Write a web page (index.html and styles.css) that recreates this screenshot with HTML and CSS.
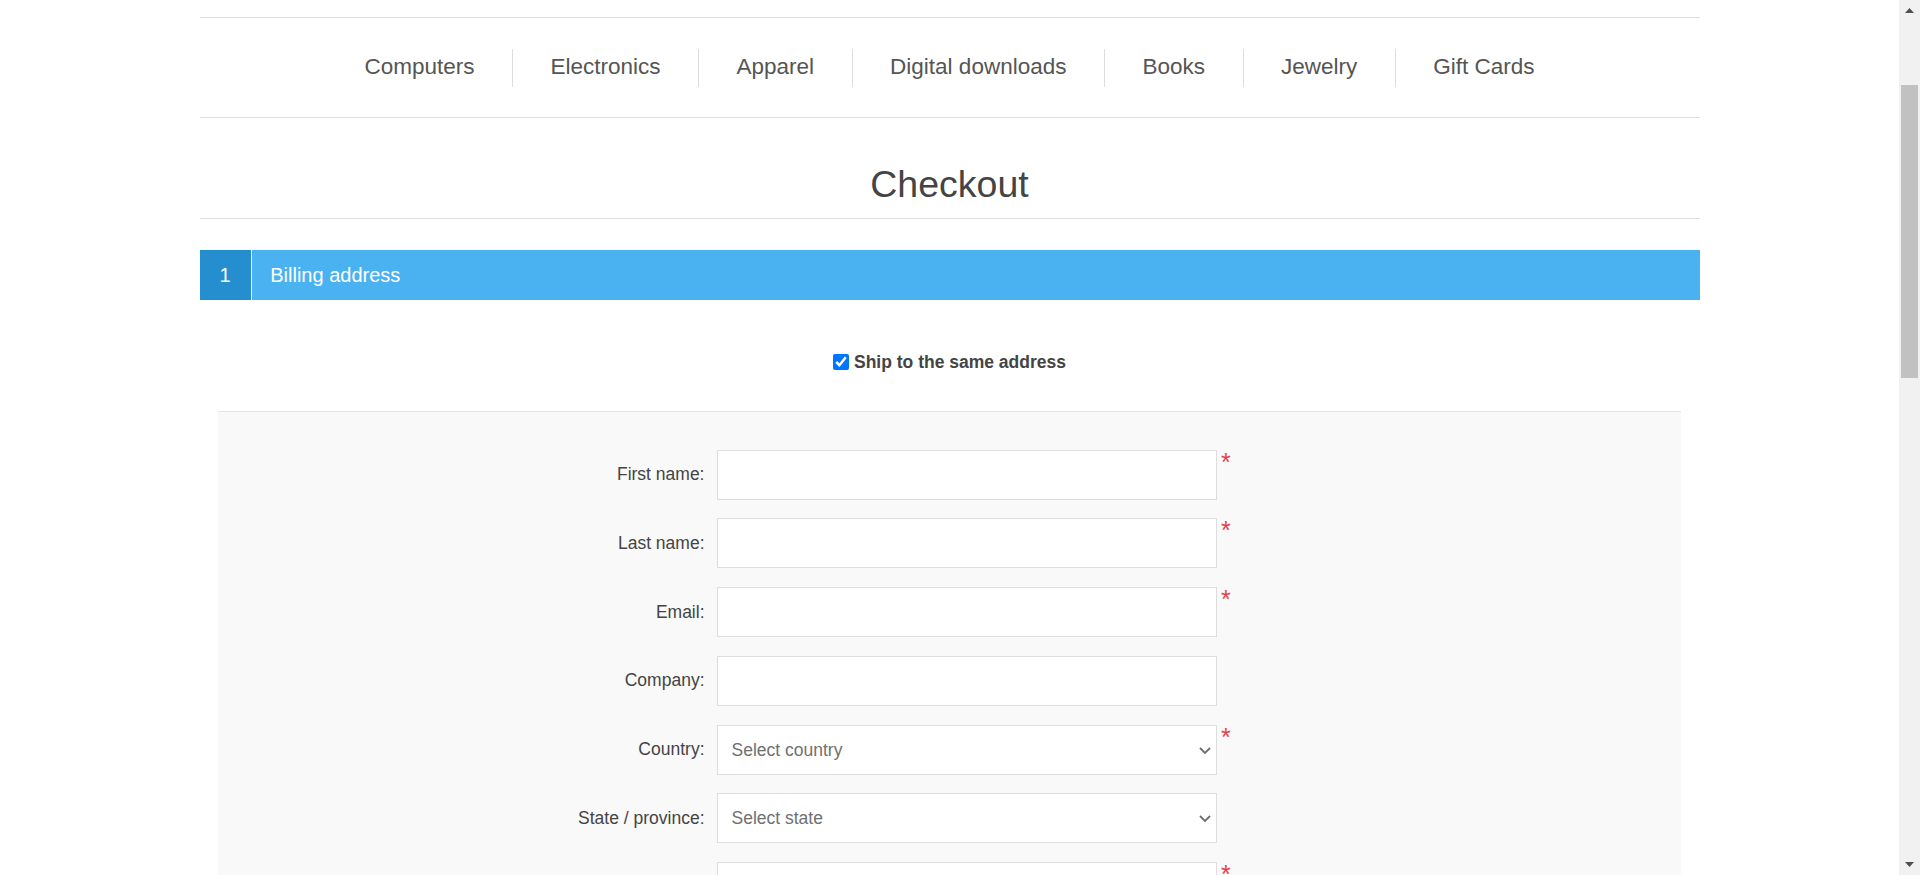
FILE: index.html
```html
<!DOCTYPE html>
<html lang="en">
<head>
<meta charset="utf-8">
<title>Checkout</title>
<link rel="stylesheet" href="styles.css">
</head>
<body>
<div class="page">
  <nav class="header-menu">
    <ul>
      <li><a href="#">Computers</a></li>
      <li><a href="#">Electronics</a></li>
      <li><a href="#">Apparel</a></li>
      <li><a href="#">Digital downloads</a></li>
      <li><a href="#">Books</a></li>
      <li><a href="#">Jewelry</a></li>
      <li><a href="#">Gift Cards</a></li>
    </ul>
  </nav>

  <div class="page-title"><h1>Checkout</h1></div>

  <div class="opc">
    <div class="step-title active"><span class="number">1</span><span class="title">Billing address</span></div>
    <div class="step">
      <div class="same-address">
        <input type="checkbox" id="same" checked>
        <label for="same">Ship to the same address</label>
      </div>
      <div class="edit-address">
        <div class="inputs"><label>First name:</label><input type="text"><span class="required">*</span></div>
        <div class="inputs"><label>Last name:</label><input type="text"><span class="required">*</span></div>
        <div class="inputs"><label>Email:</label><input type="text"><span class="required">*</span></div>
        <div class="inputs"><label>Company:</label><input type="text"></div>
        <div class="inputs"><label>Country:</label><div class="select-wrap"><select><option>Select country</option></select><svg class="chevron" width="12" height="7" viewBox="0 0 12 7"><polyline points="1,1 6,6 11,1" fill="none" stroke="#6f6f6f" stroke-width="1.8"/></svg></div><span class="required">*</span></div>
        <div class="inputs"><label>State / province:</label><div class="select-wrap"><select><option>Select state</option></select><svg class="chevron" width="12" height="7" viewBox="0 0 12 7"><polyline points="1,1 6,6 11,1" fill="none" stroke="#6f6f6f" stroke-width="1.8"/></svg></div></div>
        <div class="inputs"><label class="offscreen-label"></label><input type="text" aria-label="City"><span class="required">*</span></div>
      </div>
    </div>
  </div>
</div>

<div class="scrollbar" aria-hidden="true">
  <div class="sb-button">
    <svg width="9" height="5" viewBox="0 0 9 5"><polygon points="0,5 4.5,0 9,5" fill="#505050"/></svg>
  </div>
  <div class="sb-track"><div class="sb-thumb"></div></div>
  <div class="sb-button">
    <svg width="9" height="5" viewBox="0 0 9 5"><polygon points="0,0 4.5,5 9,0" fill="#505050"/></svg>
  </div>
</div>
</body>
</html>
```
FILE: styles.css
```css
html, body {
  margin: 0;
  padding: 0;
}
html { overflow: hidden; }
body {
  font-family: "Liberation Sans", Arial, sans-serif;
  color: #444;
  background: #fff;
  padding-right: 21px;
  height: 875px;
  overflow: hidden;
}
*, *::before, *::after { box-sizing: border-box; }

.page {
  width: 1500px;
  margin: 0 auto;
  padding-top: 17px;
}

/* top menu */
.header-menu {
  border-top: 1px solid #ddd;
  border-bottom: 1px solid #ddd;
  padding: 31px 0 30px;
}
.header-menu ul {
  display: flex;
  justify-content: center;
  list-style: none;
  margin: 0;
  padding: 0;
}
.header-menu li {
  display: flex;
  align-items: center;
  height: 38px;
  border-left: 1px solid #ddd;
}
.header-menu li:first-child { border-left: none; }
.header-menu a {
  padding: 0 37.5px 2px;
  font-size: 22.5px;
  color: #555;
  text-decoration: none;
}

/* title */
.page-title {
  margin-top: 45px;
  padding-bottom: 12px;
  border-bottom: 1px solid #ddd;
  text-align: center;
}
.page-title h1 {
  margin: 0;
  font-size: 37.5px;
  line-height: 43px;
  font-weight: normal;
  color: #444;
}

/* one page checkout */
.opc { margin-top: 31px; }
.step-title {
  display: flex;
  height: 50px;
  margin-bottom: 1px;
  background: #aaa;
  color: #fff;
  font-size: 20px;
  line-height: 50px;
}
.step-title.active { background: #4ab2f1; }
.step-title .number {
  width: 52px;
  border-right: 1px solid #fff;
  text-align: center;
  background: #999;
}
.step-title.active .number { background: #248ece; }
.step-title .title { padding-left: 18.75px; }

.step {
  padding: 0 18.75px 37.5px;
}
.same-address {
  display: flex;
  align-items: center;
  justify-content: center;
  padding-top: 51px;
  margin-bottom: 39px;
  height: 71px;
}
.same-address input {
  width: 16px;
  height: 16px;
  margin: 0 5px 0 0;
  accent-color: #0075ff;
}
.same-address label {
  font-size: 17.5px;
  font-weight: bold;
  line-height: 20px;
  color: #444;
}

.edit-address {
  border-top: 1px solid #e6e6e6;
  background: #f9f9f9;
  padding: 37.5px 18.75px 18.75px;
}
.inputs {
  display: flex;
  align-items: center;
  margin-bottom: 18.75px;
}
.inputs label {
  width: 467.5px;
  margin-right: 12.5px;
  text-align: right;
  font-size: 17.5px;
  color: #444;
}
.inputs input[type="text"],
.inputs select {
  width: 500px;
  height: 50px;
  border: 1px solid #ddd;
  background: #fff;
  padding: 0 10px;
  font-family: "Liberation Sans", Arial, sans-serif;
  font-size: 17.5px;
  color: #707070;
  border-radius: 0;
  outline: none;
}
.select-wrap {
  position: relative;
  display: flex;
}
.inputs select {
  appearance: none;
  -webkit-appearance: none;
  padding-left: 13.5px;
}
.chevron {
  position: absolute;
  right: 6px;
  top: 22px;
  pointer-events: none;
}
.required {
  align-self: flex-start;
  margin-left: 4px;
  font-size: 25px;
  line-height: 25px;
  color: #e4434b;
}

/* classic window scrollbar drawn over the page's right edge */
.scrollbar {
  position: fixed;
  top: 0;
  right: 0;
  width: 21px;
  height: 100%;
  display: flex;
  flex-direction: column;
  background: #f1f1f1;
}
.sb-button {
  height: 21px;
  display: flex;
  align-items: center;
  justify-content: center;
}
.sb-track {
  flex: 1;
  padding: 64px 2px 0;
}
.sb-thumb {
  height: 293px;
  background: #c1c1c1;
}
```
